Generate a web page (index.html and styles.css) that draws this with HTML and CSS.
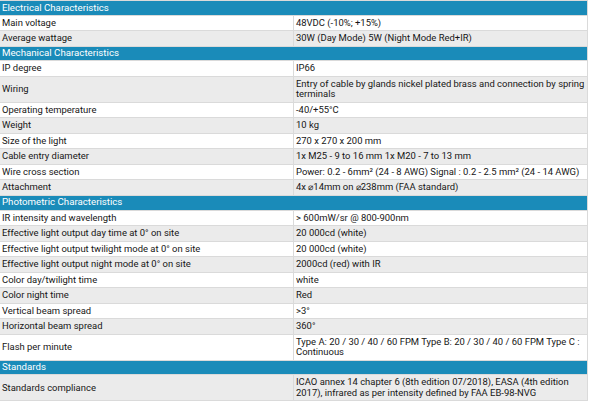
FILE: index.html
```html
<!DOCTYPE html>
<html lang="en">
<head>
<meta charset="utf-8">
<title>Specifications</title>
<link rel="stylesheet" href="styles.css">
</head>
<body>
<table class="spec">
  <tbody>
    <tr class="section"><th colspan="2">Electrical Characteristics</th></tr>
    <tr class="odd"><td class="key">Main voltage</td><td>48VDC (-10%; +15%)</td></tr>
    <tr class="even"><td class="key">Average wattage</td><td>30W (Day Mode) 5W (Night Mode Red+IR)</td></tr>
    <tr class="section"><th colspan="2">Mechanical Characteristics</th></tr>
    <tr class="odd"><td class="key">IP degree</td><td>IP66</td></tr>
    <tr class="even"><td class="key">Wiring</td><td>Entry of cable by glands nickel plated brass and connection by spring terminals</td></tr>
    <tr class="odd"><td class="key">Operating temperature</td><td>-40/+55°C</td></tr>
    <tr class="even"><td class="key">Weight</td><td>10 kg</td></tr>
    <tr class="odd"><td class="key">Size of the light</td><td>270 x 270 x 200 mm</td></tr>
    <tr class="even"><td class="key">Cable entry diameter</td><td>1x M25 - 9 to 16 mm 1x M20 - 7 to 13 mm</td></tr>
    <tr class="odd"><td class="key">Wire cross section</td><td>Power: 0.2 - 6mm² (24 - 8 AWG) Signal : 0.2 - 2.5 mm² (24 - 14 AWG)</td></tr>
    <tr class="even"><td class="key">Attachment</td><td>4x ⌀14mm on ⌀238mm (FAA standard)</td></tr>
    <tr class="section"><th colspan="2">Photometric Characteristics</th></tr>
    <tr class="odd"><td class="key">IR intensity and wavelength</td><td>&gt; 600mW/sr @ 800-900nm</td></tr>
    <tr class="even"><td class="key">Effective light output day time at 0° on site</td><td>20 000cd (white)</td></tr>
    <tr class="odd"><td class="key">Effective light output twilight mode at 0° on site</td><td>20 000cd (white)</td></tr>
    <tr class="even"><td class="key">Effective light output night mode at 0° on site</td><td>2000cd (red) with IR</td></tr>
    <tr class="odd"><td class="key">Color day/twilight time</td><td>white</td></tr>
    <tr class="even"><td class="key">Color night time</td><td>Red</td></tr>
    <tr class="odd"><td class="key">Vertical beam spread</td><td>&gt;3°</td></tr>
    <tr class="even"><td class="key">Horizontal beam spread</td><td>360°</td></tr>
    <tr class="odd"><td class="key">Flash per minute</td><td>Type A: 20 / 30 / 40 / 60 FPM Type B: 20 / 30 / 40 / 60 FPM Type C : Continuous</td></tr>
    <tr class="section"><th colspan="2">Standards</th></tr>
    <tr class="even"><td class="key">Standards compliance</td><td>ICAO annex 14 chapter 6 (8th edition 07/2018), EASA (4th edition 2017), infrared as per intensity defined by FAA EB-98-NVG</td></tr>
  </tbody>
</table>
</body>
</html>
```

FILE: styles.css
```css
html, body {
  margin: 0;
  padding: 0;
  background: #ffffff;
}

.spec {
  width: 589px;
  margin: 0 0 0 -1px;
  border-collapse: separate;
  border-spacing: 1px;
  background: #dadada;
  font-family: Roboto, "Liberation Sans", Arial, sans-serif;
  font-size: 9.45px;
  line-height: 10.5px;
  color: #161616;
  table-layout: fixed;
}

.spec th,
.spec td {
  padding: 2px 2px;
  text-align: left;
  vertical-align: middle;
  font-weight: normal;
}

.spec .section th {
  padding: 1.6px 2px;
  background: #1a8bb9;
  color: #ffffff;
  font-size: 9.7px;
}

.spec .key {
  width: 288px;
}

.spec .odd td {
  background: #ffffff;
}

.spec .even td {
  background: #ebebeb;
}
```
